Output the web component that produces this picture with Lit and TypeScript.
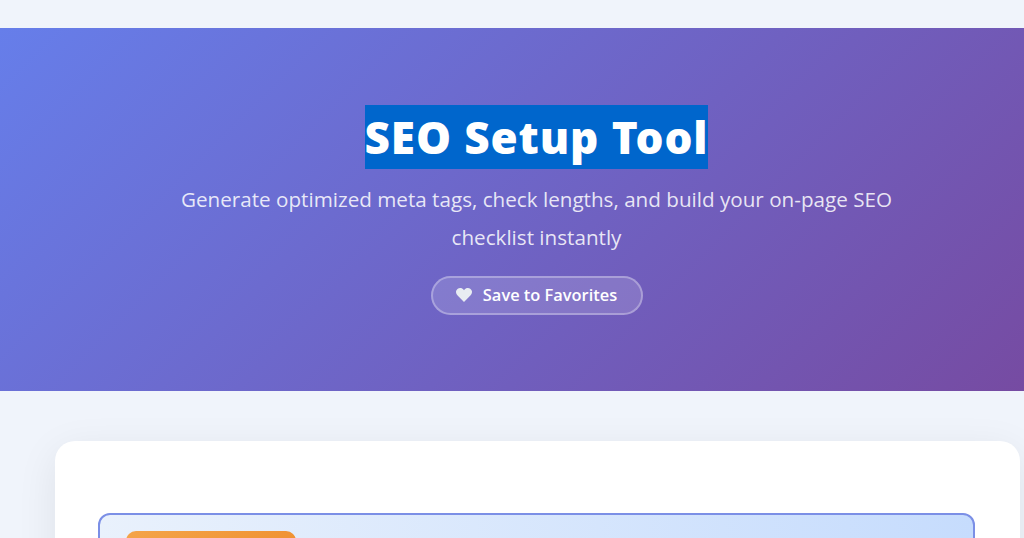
import { LitElement, html, css } from "lit";
import { customElement } from "lit/decorators.js";

@customElement("app-root")
export class AppRoot extends LitElement {
  static styles = css`
    :host {
      display: block;
      height: 538px;
      overflow: hidden;
      background: #f0f4fb;
      font-family: "Open Sans", "Noto Sans", sans-serif;
    }
    .hero {
      margin-top: 28px;
      height: 363px;
      box-sizing: border-box;
      padding: 77px 0 0 49px;
      background: linear-gradient(135deg, #667eea 0%, #764ba2 100%);
      display: flex;
      flex-direction: column;
      align-items: center;
      color: #fff;
      text-align: center;
    }
    h1 {
      margin: 0;
      font-size: 44px;
      line-height: 64px;
      height: 64px;
      font-weight: 900;
      font-family: "Noto Sans", "Open Sans", sans-serif;
    }
    h1 span {
      display: inline-block;
      background: #0066cc;
      letter-spacing: 0.9px;
    }
    p {
      margin: 11px 0 0;
      width: 760px;
      font-size: 20.65px;
      line-height: 38px;
      color: rgba(255, 255, 255, 0.85);
    }
    .fav {
      margin-top: 20px;
      width: 212px;
      height: 39px;
      box-sizing: border-box;
      padding-bottom: 2px;
      display: flex;
      align-items: center;
      justify-content: center;
      gap: 11px;
      border: 2px solid rgba(255, 255, 255, 0.3);
      border-radius: 20px;
      background: rgba(255, 255, 255, 0.15);
      color: #fff;
      font-size: 16.4px;
      font-weight: 600;
    }
    .fav svg { width: 16px; height: 14px; display: block; }
    .content { padding: 50px 4px 0 55px; }
    .card {
      background: #fff;
      border-radius: 20px;
      padding: 72px 45px 0 43px;
      height: 200px;
      box-shadow: 0 10px 40px rgba(0, 0, 0, 0.08);
    }
    .panel {
      height: 120px;
      box-sizing: border-box;
      padding: 16px 26px;
      border: 2px solid #7b8fe6;
      border-radius: 12px;
      background: linear-gradient(90deg, #e9f1fc 0%, #c6dcfd 100%);
    }
    .badge {
      width: 170px;
      height: 40px;
      border-radius: 10px;
      background: linear-gradient(135deg, #f4a449 0%, #ef8f30 100%);
    }
  `;

  render() {
    return html`
      <section class="hero">
        <h1><span>SEO Setup Tool</span></h1>
        <p>Generate optimized meta tags, check lengths, and build your on-page SEO checklist instantly</p>
        <div class="fav">
          <svg viewBox="0 0 24 21" fill="#e8edf2">
            <path d="M12 21 L2.4 11.4 C-0.8 8.2 -0.8 3.6 2.2 1.4 C5 -0.6 8.6 -0.2 10.8 2 L12 3.2 L13.2 2 C15.4 -0.2 19 -0.6 21.8 1.4 C24.8 3.6 24.8 8.2 21.6 11.4 Z" />
          </svg>
          <span>Save to Favorites</span>
        </div>
      </section>
      <div class="content">
        <div class="card">
          <div class="panel"><div class="badge"></div></div>
        </div>
      </div>
    `;
  }
}
